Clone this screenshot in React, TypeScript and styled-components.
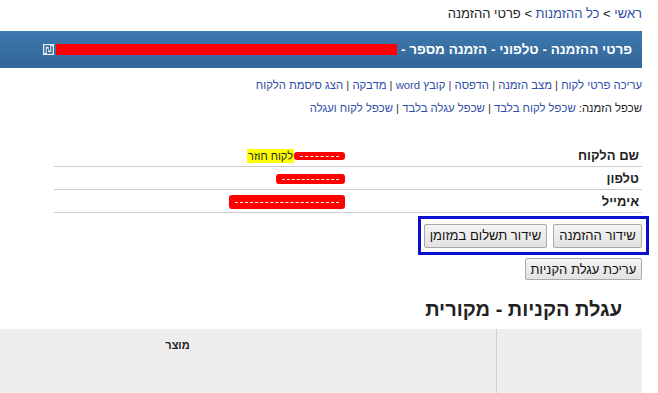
import React from 'react';
import styled, { createGlobalStyle } from 'styled-components';

const GlobalStyle = createGlobalStyle`
  html, body {
    margin: 0;
    padding: 0;
    background: #ffffff;
  }
  body {
    font-family: "Liberation Sans", "DejaVu Sans", sans-serif;
    font-size: 13px;
    color: #222222;
    direction: rtl;
    overflow: hidden;
  }
`;

const Page = styled.div`
  width: 642px;
  margin-right: auto;
  direction: rtl;
`;

const Breadcrumb = styled.div`
  height: 31px;
  line-height: 27px;
  font-size: 13px;
  color: #222;
`;

const Link = styled.a`
  color: #2f4ea8;
  text-decoration: none;
  cursor: pointer;
`;

const HeaderBar = styled.div`
  height: 37px;
  display: flex;
  align-items: center;
  gap: 2px;
  padding: 0 10px 0 43px;
  background: linear-gradient(to bottom, #3d78ae, #336699);
`;

const Title = styled.div`
  flex: 1;
  display: flex;
  align-items: center;
  color: #ffffff;
  font-weight: bold;
  font-size: 13.5px;
  white-space: nowrap;
`;

const Redacted = styled.span<{ $w?: number; $h: number; $round?: boolean }>`
  display: inline-block;
  flex: ${p => (p.$w ? '0 0 auto' : '1')};
  width: ${p => (p.$w ? `${p.$w}px` : 'auto')};
  height: ${p => p.$h}px;
  background: #ff0000;
  border-radius: ${p => (p.$round ? '3px' : '0')};
  position: relative;
  vertical-align: middle;
  &::after {
    content: '';
    position: absolute;
    left: 6px;
    right: 6px;
    top: 50%;
    border-top: ${p => (p.$round ? '1px dashed #ffffff' : 'none')};
  }
`;

const Actions = styled.div`
  padding-top: 6px;
  line-height: 23px;
  font-size: 11.3px;
`;

const Sep = styled.span<{ $visited?: boolean }>`
  color: ${p => (p.$visited ? '#6a2a90' : '#333')};
`;

const InfoTable = styled.table`
  width: 588px;
  margin: 24px 0 0 auto;
  border-collapse: collapse;
  font-size: 13px;
`;

const Row = styled.tr`
  border-bottom: 1px solid #cccccc;
`;

const Label = styled.td`
  width: 50%;
  height: 22px;
  padding: 0 3px 0 0;
  font-weight: bold;
  text-align: right;
  color: #222;
`;

const Value = styled.td`
  width: 50%;
  padding: 0 3px 0 0;
  text-align: right;
`;

const ValueInner = styled.span`
  display: inline-flex;
  align-items: center;
`;

const Returning = styled.span`
  background: #ffff00;
  font-size: 11px;
  padding: 1px 1px;
`;

const Annotated = styled.div`
  width: 221px;
  height: 33px;
  margin: 3px -7px 0 0;
  border: 3px solid #0a10d0;
  display: flex;
  align-items: center;
  gap: 6px;
  padding-right: 4px;
`;

const Button = styled.button<{ $w: number; $h?: number }>`
  width: ${p => p.$w}px;
  height: ${p => p.$h ?? 24}px;
  padding: 0;
  font-family: "Liberation Sans", "DejaVu Sans", sans-serif;
  font-size: 13px;
  color: #111;
  background: linear-gradient(to bottom, #f4f4f4, #e2e2e2);
  border: 1px solid #a9a9a9;
  border-radius: 2px;
  cursor: pointer;
`;

const EditRow = styled.div`
  margin-top: 3px;
`;

const Heading = styled.h2`
  margin: 14px 20px 0 0;
  font-size: 20px;
  font-weight: bold;
  color: #222;
  height: 30px;
  line-height: 30px;
`;

const CartTable = styled.div`
  width: 643px;
  height: 70px;
  margin-top: 5px;
  display: flex;
  background: #eeeeee;
`;

const CartCell = styled.div<{ $w: number; $pr?: number }>`
  box-sizing: border-box;
  flex-shrink: 0;
  width: ${p => p.$w}px;
  padding: 10px ${p => p.$pr ?? 0}px 0 0;
  font-weight: bold;
  font-size: 11px;
  text-align: center;
  border-left: 1px solid #cfcfcf;
  &:last-child {
    border-left: none;
  }
`;

const ShekelIcon = () => (
  <svg width="11" height="11" viewBox="0 0 11 11" style={{ flexShrink: 0 }}>
    <rect x="0" y="0" width="11" height="11" fill="#e6eef7" />
    <path d="M2 9V2h4.5v4.5M9 2v7H4.5V4.5" stroke="#2f5f93" strokeWidth="1.4" fill="none" />
  </svg>
);

const App = () => (
  <>
    <GlobalStyle />
    <Page>
      <Breadcrumb>
        <Link>ראשי</Link> &gt; <Link>כל ההזמנות</Link> &gt; פרטי ההזמנה
      </Breadcrumb>
      <HeaderBar>
        <Title>
          פרטי ההזמנה - טלפוני - הזמנה מספר -&nbsp;
          <Redacted $h={11} />
        </Title>
        <ShekelIcon />
      </HeaderBar>
      <Actions>
        <div>
          <Link>עריכה פרטי לקוח</Link> <Sep>|</Sep> <Link>מצב הזמנה</Link> <Sep>|</Sep>{' '}
          <Link>הדפסה</Link> <Sep $visited>|</Sep> <Link>קובץ word</Link> <Sep>|</Sep>{' '}
          <Link>מדבקה</Link> <Sep>|</Sep> <Link>הצג סיסמת הלקוח</Link>
        </div>
        <div>
          שכפל הזמנה: <Link>שכפל לקוח בלבד</Link> <Sep>|</Sep>{' '}
          <Link>שכפל עגלה בלבד</Link> <Sep>|</Sep> <Link>שכפל לקוח ועגלה</Link>
        </div>
      </Actions>
      <InfoTable>
        <tbody>
          <Row>
            <Label>שם הלקוח</Label>
            <Value>
              <ValueInner>
                <Redacted $w={51} $h={8} $round />
                <Returning>לקוח חוזר</Returning>
              </ValueInner>
            </Value>
          </Row>
          <Row>
            <Label>טלפון</Label>
            <Value>
              <Redacted $w={69} $h={10} $round />
            </Value>
          </Row>
          <Row>
            <Label>אימייל</Label>
            <Value>
              <Redacted $w={116} $h={14} $round />
            </Value>
          </Row>
        </tbody>
      </InfoTable>
      <Annotated>
        <Button $w={89}>שידור ההזמנה</Button>
        <Button $w={123}>שידור תשלום במזומן</Button>
      </Annotated>
      <EditRow>
        <Button $w={117} $h={22}>עריכת עגלת הקניות</Button>
      </EditRow>
      <Heading>עגלת הקניות - מקורית</Heading>
      <CartTable>
        <CartCell $w={146} />
        <CartCell $w={497} $pr={140}>מוצר</CartCell>
      </CartTable>
    </Page>
  </>
);

export default App;
